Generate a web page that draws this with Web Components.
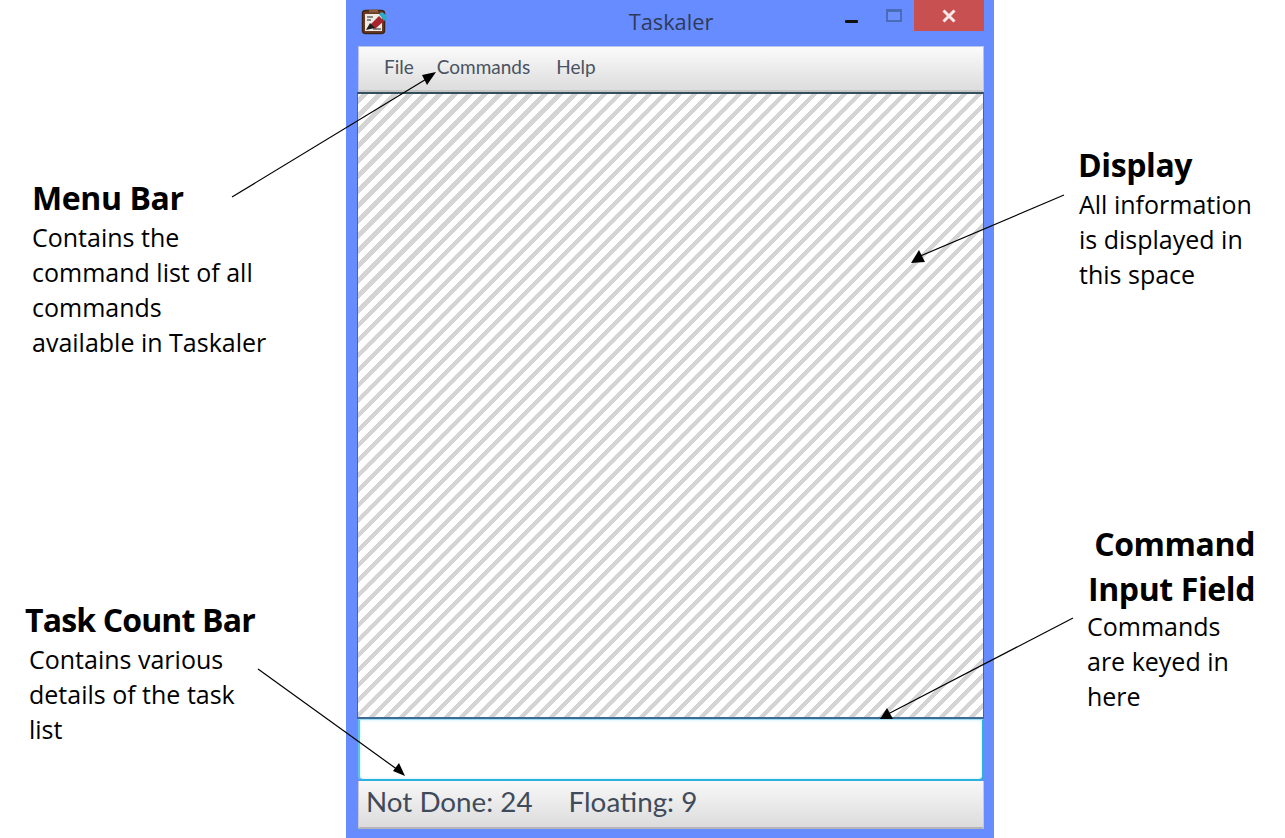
<!DOCTYPE html>
<html>
<head>
<meta charset="utf-8">
<title>Taskaler</title>
<style>
  html, body { margin: 0; padding: 0; background: #fff; }
  body { width: 1285px; height: 838px; overflow: hidden; position: relative; font-family: "Open Sans", sans-serif; }
  app-window { margin-left: 346px; }
  callout-label { position: absolute; }
</style>
</head>
<body>
<app-window></app-window>

<callout-label style="left:32px;top:175px" title-text="Menu Bar">
  Contains the<br>command list of all<br>commands<br>available in Taskaler
</callout-label>
<callout-label style="left:1078px;top:142px;--label-left:1px" title-text="Display">
  All information<br>is displayed in<br>this space
</callout-label>
<callout-label style="left:25px;top:597px;--label-left:4px;--title-spacing:-0.85px" title-text="Task Count Bar">
  Contains various<br>details of the task<br>list
</callout-label>
<callout-label style="left:1087px;top:521px;width:168px;--body-top:-2px" title-text="Command<br>Input Field" title-align="right">
  Commands<br>are keyed in<br>here
</callout-label>

<arrow-overlay></arrow-overlay>

<script>
class TitleBar extends HTMLElement {
  constructor() {
    super();
    const shadow = this.attachShadow({ mode: 'open' });
    shadow.innerHTML = `
      <style>
      :host { display: flex; align-items: center; height: 46px; flex: none; position: relative; }
      .icon { margin: 0 0 0 14px; width: 28px; height: 28px; display: block; position: relative; top: -1px; }
      .name {
        position: absolute; left: 0; right: 0; top: 8px; text-align: center;
        font: 21.8px/28px "Open Sans", sans-serif; color: #2f3a58; padding-left: 2px;
      }
      .controls { margin-left: auto; margin-right: 10px; display: flex; align-self: flex-start; position: relative; }
      .min { width: 13px; height: 3px; background: #111; margin: 20px 28px 0 0; border-radius: 1px; }
      .max { width: 12px; height: 8px; border: 2px solid #4a6bb8; border-top-width: 3px; margin: 9px 12px 0 0; background: #6d90ff; }
      .close { width: 70px; height: 31px; background: #c85050; display: flex; align-items: center; justify-content: center; }
      </style>
      <svg class="icon" viewBox="0 0 28 28">
        <rect x="2.5" y="2.5" width="22" height="23" rx="3" fill="#6b3a22" stroke="#3f2415" stroke-width="1.5"/>
        <rect x="5" y="6" width="17" height="17" fill="#efece6"/>
        <rect x="9" y="1.5" width="9" height="3" fill="#8a5a3a"/>
        <path d="M7 9h6M7 12h4M13 21h8" stroke="#666" stroke-width="1.5"/>
        <path d="M10 17L19 8l5 5-9 8z" fill="#a8242c"/>
        <path d="M19 6l3-2 4 3 1 4-3 2z" fill="#2fa9c4"/>
        <path d="M6 22l4-7 5 5z" fill="#1c1c1c"/>
      </svg>
      <div class="name"><slot></slot></div>
      <div class="controls">
        <div class="min"></div>
        <div class="max"></div>
        <div class="close">
          <svg width="16" height="14" viewBox="0 0 16 14"><path d="M2.5 1.5L13.5 12.5M13.5 1.5L2.5 12.5" stroke="#f4e8e8" stroke-width="3"/></svg>
        </div>
      </div>
    `;
  }
}

class MenuBar extends HTMLElement {
  constructor() {
    super();
    const shadow = this.attachShadow({ mode: 'open' });
    const items = (this.getAttribute('items') || '').split(',');
    const listItems = items.map((item) => `<span>${item}</span>`).join('');
    shadow.innerHTML = `
      <style>
      :host {
        display: flex; flex: none; height: 46px; box-sizing: border-box; margin: 0 10px 0 12px;
        background: linear-gradient(#fbfbfb, #dedede 90%);
        border: 1px solid #b9c4e6; border-bottom: 0;
        box-shadow: inset 0 -2px 0 #c6c6c6;
        align-items: center; padding: 0 0 7px 25px;
        font: 19px Lato, sans-serif; color: #4a5362;
        gap: 26px;
      }
      span:first-of-type { margin-right: -3px; }
      </style>
      ${listItems}
    `;
  }
}

class DisplayPane extends HTMLElement {
  constructor() {
    super();
    const shadow = this.attachShadow({ mode: 'open' });
    shadow.innerHTML = `
      <style>
      :host {
        display: block; flex: none; height: 627px; box-sizing: border-box; margin: 0 10px 0 11px;
        border: 1px solid #3f6a94; border-top: 2px solid #33505f; border-bottom: 2px solid #3f6a94;
        background: repeating-linear-gradient(-45deg, #fff 0, #fff 6.1px, #d4d4d4 6.1px, #d4d4d4 10.6px);
      }
      </style>
    `;
  }
}

class CommandInput extends HTMLElement {
  constructor() {
    super();
    const shadow = this.attachShadow({ mode: 'open' });
    shadow.innerHTML = `
      <style>
      :host { display: block; flex: none; margin: 0 10px 0 12px; }
      input {
        display: block; width: 100%; height: 62px; box-sizing: border-box; outline: none; padding: 0 8px;
        border: 2px solid #29b2dc; border-top: 1px solid #9fdcef; border-left-color: #5cc6e6;
        border-radius: 0 0 5px 5px; background: #fff;
        box-shadow: inset 0 0 3px #bfeaf5;
      }
      </style>
      <input type="text" aria-label="Command">
    `;
  }
}

class StatusBar extends HTMLElement {
  constructor() {
    super();
    const shadow = this.attachShadow({ mode: 'open' });
    shadow.innerHTML = `
      <style>
      :host {
        display: flex; flex: none; height: 48px; box-sizing: border-box; margin: 0 10px 0 12px;
        background: linear-gradient(#f8f8f8, #dcdcdc);
        border-bottom: 2px solid #b4b4bc; border-left: 1px solid #c9c9d2; border-right: 1px solid #c9c9d2;
        align-items: center; padding: 0 0 6px 7px; gap: 36px;
        font: 27.8px Lato, sans-serif; color: #3f4a5a;
      }
      </style>
      <slot></slot>
    `;
  }
}

class AppWindow extends HTMLElement {
  constructor() {
    super();
    const shadow = this.attachShadow({ mode: 'open' });
    shadow.innerHTML = `
      <style>
      :host { display: flex; flex-direction: column; width: 648px; height: 838px; background: #678cff; }
      </style>
      <title-bar>Taskaler</title-bar>
      <menu-bar items="File,Commands,Help"></menu-bar>
      <display-pane></display-pane>
      <command-input></command-input>
      <status-bar><span>Not Done: 24</span><span>Floating: 9</span></status-bar>
    `;
  }
}

class CalloutLabel extends HTMLElement {
  constructor() {
    super();
    const shadow = this.attachShadow({ mode: 'open' });
    const titleText = this.getAttribute('title-text') || '';
    const titleAlign = this.getAttribute('title-align') || 'left';
    shadow.innerHTML = `
      <style>
      :host { display: block; color: #000; font-family: "Open Sans", sans-serif; }
      h2 {
        margin: 0; font-size: 32px; line-height: 45px; font-weight: 700; text-align: ${titleAlign};
        letter-spacing: var(--title-spacing, -0.4px); white-space: nowrap;
      }
      p {
        margin: var(--body-top, 0) 0 0 var(--label-left, 0); font-size: 25px; line-height: 35px; white-space: nowrap;
      }
      </style>
      <h2>${titleText}</h2>
      <p><slot></slot></p>
    `;
  }
}

class ArrowOverlay extends HTMLElement {
  constructor() {
    super();
    const shadow = this.attachShadow({ mode: 'open' });
    const arrows = [
      { from: [232, 197], to: [428, 78], head: '436,72 422,75 427,85' },
      { from: [1064, 195], to: [918, 257], head: '911,263 925,262 919,250' },
      { from: [258, 669], to: [398, 770], head: '405,776 393,771 399,763' },
      { from: [1073, 618], to: [888, 714], head: '880,719 893,719 887,708' },
    ];
    const parts = arrows.map((a) => `
      <line x1="${a.from[0]}" y1="${a.from[1]}" x2="${a.to[0]}" y2="${a.to[1]}" stroke="#000" stroke-width="1.2"/>
      <polygon points="${a.head}" fill="#000"/>`).join('');
    shadow.innerHTML = `
      <style>
      :host { position: absolute; left: 0; top: 0; width: 1285px; height: 838px; pointer-events: none; }
      svg { display: block; }
      </style>
      <svg width="1285" height="838" viewBox="0 0 1285 838">${parts}</svg>
    `;
  }
}

customElements.define('title-bar', TitleBar);
customElements.define('menu-bar', MenuBar);
customElements.define('display-pane', DisplayPane);
customElements.define('command-input', CommandInput);
customElements.define('status-bar', StatusBar);
customElements.define('app-window', AppWindow);
customElements.define('callout-label', CalloutLabel);
customElements.define('arrow-overlay', ArrowOverlay);
</script>
</body>
</html>
